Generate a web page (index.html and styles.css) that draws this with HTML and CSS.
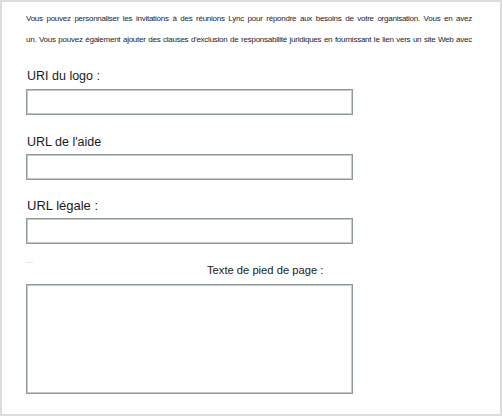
FILE: index.html
```html
<!DOCTYPE html>
<html lang="fr">
<head>
<meta charset="utf-8">
<link rel="stylesheet" href="styles.css">
</head>
<body>
<div class="frame">
  <div class="intro">
    <span class="line">Vous pouvez personnaliser les invitations à des réunions Lync pour répondre aux besoins de votre organisation. Vous en avez</span>
    <span class="line">un. Vous pouvez également ajouter des clauses d'exclusion de responsabilité juridiques en fournissant le lien vers un site Web avec</span>
  </div>
  <label class="label label-logo">URI du logo :</label>
  <input class="field field-logo" type="text">
  <label class="label label-help">URL de l'aide</label>
  <input class="field field-help" type="text">
  <label class="label label-legal">URL légale :</label>
  <input class="field field-legal" type="text">
  <div class="footer-row"><span class="mark"></span><label class="label label-footer">Texte de pied de page :</label></div>
  <textarea class="area"></textarea>
</div>
</body>
</html>
```

FILE: styles.css
```css
html, body {
  margin: 0;
  padding: 0;
  background: #ffffff;
}
.frame {
  box-sizing: border-box;
  width: 502px;
  height: 416px;
  border: 2px solid #dcdcdc;
  padding: 6px 0 0 24px;
  display: flex;
  flex-direction: column;
  align-items: flex-start;
  font-family: "Liberation Sans", Arial, sans-serif;
  color: #1a1a1a;
}
.intro {
  width: 446px;
  font-size: 8px;
  line-height: 21px;
  color: #1c1c2c;
  letter-spacing: -0.25px;
}
.line {
  display: block;
  text-align: justify;
  text-align-last: justify;
  white-space: nowrap;
}
.label {
  display: block;
  font-size: 12.5px;
  line-height: 16px;
  padding-left: 1px;
}
.label-logo { margin-top: 18px; }
.label-help { margin-top: 19px; }
.label-legal { margin-top: 17px; font-size: 13px; line-height: 18px; }
.footer-row {
  margin-top: 18px;
  display: flex;
  align-items: flex-start;
  height: 16px;
}
.mark {
  width: 7px;
  height: 1px;
  background: #e6e6e6;
}
.label-footer {
  margin-left: 173px;
  font-size: 11.2px;
}
.field, .area {
  box-sizing: border-box;
  width: 327px;
  margin: 0;
  border: 1px solid #8e9a9a;
  box-shadow: inset 0 0 0 1px #c2caca;
  background: #ffffff;
  outline: none;
  padding: 0;
}
.field { height: 26px; }
.field-logo { margin-top: 5px; }
.field-help { margin-top: 4px; }
.field-legal { margin-top: 3px; }
.area {
  margin-top: 6px;
  height: 110px;
  resize: none;
}
```
